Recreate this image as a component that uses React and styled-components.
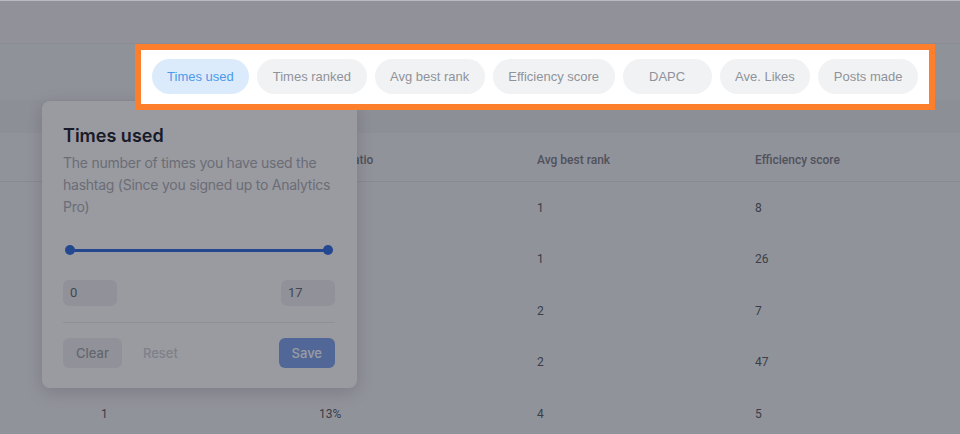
import React, { useLayoutEffect, useRef } from "react";
import styled, { createGlobalStyle } from "styled-components";

const GlobalStyle = createGlobalStyle`
  html, body { margin: 0; padding: 0; }
  body { background: #eeeff1; font-family: Roboto, "Liberation Sans", sans-serif; }
  * { box-sizing: border-box; }
`;

const Page = styled.div`
  position: relative;
  width: 960px;
  height: 434px;
  overflow: hidden;
  background: #eeeff1;
  border-top: 1px solid #b9babf;
`;

const TopBar = styled.header`
  height: 43px;
  border-bottom: 1px solid #e6e7ea;
  background: #eff0f2;
`;

const Toolbar = styled.div`
  height: 89px;
  display: flex;
  justify-content: flex-end;
  align-items: flex-start;
  padding-right: 25px;
  background: linear-gradient(#eeeff1 0 56px, #e9eaed 56px);
`;

const Highlight = styled.div`
  position: relative;
  z-index: 20;
  display: flex;
  gap: 8px;
  padding: 9px 11px 10px;
  background: #ffffff;
  border: 6px solid #fd7e2b;
`;

const Chip = styled.button`
  height: 35px;
  min-width: 89px;
  padding: 0 15.5px;
  border: none;
  border-radius: 18px;
  font: 400 13px/35px "Liberation Sans", Arial, sans-serif;
  white-space: nowrap;
  cursor: pointer;
  background: ${(p) => (p.$active ? "#dcebfb" : "#f1f2f4")};
  color: ${(p) => (p.$active ? "#4b9aea" : "#8f939b")};
`;

const TableScroll = styled.div`
  overflow: hidden;
  background: #f0f1f3;
`;

const Table = styled.div`
  width: 1744px;
`;

const HeadRow = styled.div`
  display: grid;
  grid-template-columns: repeat(8, 218px);
  height: 49px;
  padding-top: 6px;
  border-bottom: 1px solid #e0e1e5;
`;

const HeadCell = styled.div`
  padding-left: 16px;
  font: 500 12px/42px Roboto, "Liberation Sans", sans-serif;
  color: #7f828a;
  white-space: nowrap;
`;

const Row = styled.div`
  display: grid;
  grid-template-columns: repeat(8, 218px);
  height: 51.5px;
  align-items: center;
`;

const Cell = styled.div`
  padding-left: 16px;
  font: 400 12px/16px Roboto, "Liberation Sans", sans-serif;
  color: #5c5f67;
`;

const Popover = styled.div`
  position: absolute;
  left: 42px;
  top: 100px;
  z-index: 5;
  width: 315px;
  padding: 23px 22px 20px 21px;
  background: #ffffff;
  border-radius: 8px;
  box-shadow: 0 4px 18px rgba(0, 0, 0, 0.16);
  font-family: Inter, "Liberation Sans", sans-serif;
`;

const Title = styled.h3`
  margin: 0;
  font: 600 18px/24px Inter, "Liberation Sans", sans-serif;
  color: #1f2430;
`;

const Description = styled.p`
  margin: 4px 0 0;
  font: 400 14px/22px Inter, "Liberation Sans", sans-serif;
  letter-spacing: -0.25px;
  color: #aeb0b5;
`;

const Slider = styled.div`
  display: flex;
  align-items: center;
  height: 10px;
  margin: 27px 2px 0;
`;

const Thumb = styled.span`
  flex: none;
  width: 10px;
  height: 10px;
  border-radius: 50%;
  background: #3570e0;
`;

const Track = styled.span`
  flex: 1;
  height: 3px;
  margin: 0 -1px;
  background: #3570e0;
`;

const RangeRow = styled.div`
  display: flex;
  justify-content: space-between;
  margin-top: 25px;
`;

const ValueBox = styled.div`
  width: 54px;
  height: 26px;
  padding-left: 7px;
  border-radius: 6px;
  background: #eff0f2;
  font: 400 13px/26px Roboto, "Liberation Sans", sans-serif;
  color: #6a6e76;
`;

const Divider = styled.hr`
  margin: 16px 0 0;
  border: none;
  height: 1px;
  background: #eaebee;
`;

const Actions = styled.div`
  display: flex;
  align-items: center;
  gap: 8px;
  margin-top: 15px;
`;

const variants = {
  clear: "background: #eff0f2; color: #a2a5ab;",
  reset: "background: transparent; color: #d0d2d6;",
  save: "background: #80a6ee; color: #ffffff; margin-left: auto;",
};

const ActionButton = styled.button`
  height: 30px;
  padding: 0 13px;
  border: none;
  border-radius: 6px;
  font: 500 13px/30px Inter, "Liberation Sans", sans-serif;
  cursor: pointer;
  ${(p) => variants[p.$variant]}
`;

const Overlay = styled.div`
  position: absolute;
  inset: 0;
  z-index: 10;
  background: rgba(14, 16, 30, 0.42);
`;

const chips = [
  "Times used",
  "Times ranked",
  "Avg best rank",
  "Efficiency score",
  "DAPC",
  "Ave. Likes",
  "Posts made",
];

const columns = [
  "Times used",
  "Times ranked",
  "Rank ratio",
  "Avg best rank",
  "Efficiency score",
  "DAPC",
  "Ave. Likes",
  "Posts made",
];

const rows = [
  ["3", "3", "100%", "1", "8", "2.7", "412", "14"],
  ["5", "4", "80%", "1", "26", "5.2", "1,083", "22"],
  ["6", "2", "33%", "2", "7", "1.2", "298", "11"],
  ["17", "9", "53%", "2", "47", "2.8", "736", "31"],
  ["8", "1", "13%", "4", "5", "0.6", "187", "9"],
];

export default function App() {
  const scrollRef = useRef(null);
  useLayoutEffect(() => {
    if (scrollRef.current) scrollRef.current.scrollLeft = 133;
  }, []);

  return (
    <>
      <GlobalStyle />
      <Page>
        <TopBar />
        <Toolbar>
          <Highlight>
            {chips.map((c, i) => (
              <Chip key={c} $active={i === 0}>
                {c}
              </Chip>
            ))}
          </Highlight>
        </Toolbar>
        <TableScroll ref={scrollRef}>
          <Table>
            <HeadRow>
              {columns.map((c) => (
                <HeadCell key={c}>{c}</HeadCell>
              ))}
            </HeadRow>
            {rows.map((r, i) => (
              <Row key={i}>
                {r.map((v, j) => (
                  <Cell key={j}>{v}</Cell>
                ))}
              </Row>
            ))}
          </Table>
        </TableScroll>
        <Popover>
          <Title>Times used</Title>
          <Description>
            The number of times you have used the hashtag (Since you signed up
            to Analytics Pro)
          </Description>
          <Slider>
            <Thumb />
            <Track />
            <Thumb />
          </Slider>
          <RangeRow>
            <ValueBox>0</ValueBox>
            <ValueBox>17</ValueBox>
          </RangeRow>
          <Divider />
          <Actions>
            <ActionButton $variant="clear">Clear</ActionButton>
            <ActionButton $variant="reset">Reset</ActionButton>
            <ActionButton $variant="save">Save</ActionButton>
          </Actions>
        </Popover>
        <Overlay />
      </Page>
    </>
  );
}
